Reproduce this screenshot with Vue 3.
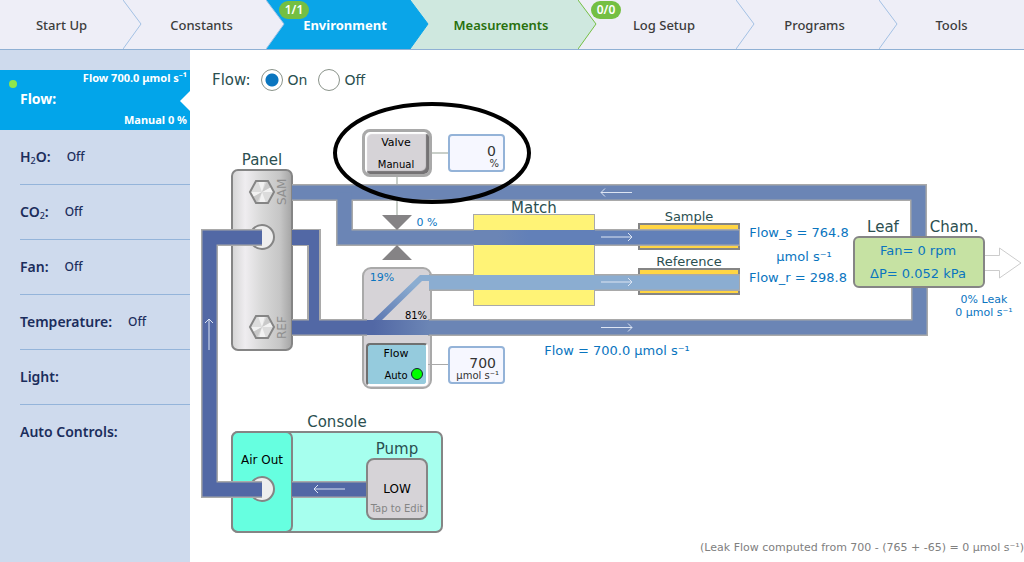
<script setup>
import { ref } from 'vue'

const tabs = [
  { name: 'Start Up', grow: 123, kind: 'plain' },
  { name: 'Constants', grow: 143, kind: 'plain' },
  { name: 'Environment', grow: 144, kind: 'active', badge: '1/1' },
  { name: 'Measurements', grow: 168, kind: 'green' },
  { name: 'Log Setup', grow: 158, kind: 'plain', badge: '0/0' },
  { name: 'Programs', grow: 143, kind: 'plain' },
  { name: 'Tools', grow: 145, kind: 'plain' }
]

const settings = [
  { pre: 'H', sub: '2', post: 'O:', state: 'Off' },
  { pre: 'CO', sub: '2', post: ':', state: 'Off' },
  { pre: 'Fan:', state: 'Off' },
  { pre: 'Temperature:', state: 'Off' },
  { pre: 'Light:' },
  { pre: 'Auto Controls:' }
]

const flow = ref('on')
const valve = ref('0')
const flowRate = ref('700')
</script>

<template>
  <div class="app">
    <nav class="tabs" aria-label="Sections">
      <button
        v-for="(t, i) in tabs"
        :key="t.name"
        type="button"
        class="tab"
        :class="t.kind"
        :style="{ flexGrow: t.grow, zIndex: 10 - i }"
      >
        <span class="tab-name">{{ t.name }}</span>
        <svg v-if="i < 6" class="chevron" viewBox="0 0 19 49" preserveAspectRatio="none" aria-hidden="true">
          <path class="fill" d="M0 0L18 24L0 49Z" />
          <path class="edge" d="M0 0L18 24L0 49" />
        </svg>
        <span v-if="t.badge" class="badge">{{ t.badge }}</span>
      </button>
    </nav>

    <div class="body">
      <aside class="side">
        <button type="button" class="current">
          <span class="dot"></span>
          <span class="top">Flow 700.0 μmol s⁻¹</span>
          <span class="title">Flow:</span>
          <span class="bottom">Manual 0 %</span>
        </button>
        <button v-for="s in settings" :key="s.pre" type="button" class="setting">
          <span class="name">{{ s.pre }}<sub v-if="s.sub">{{ s.sub }}</sub>{{ s.post }}</span>
          <span class="state">{{ s.state }}</span>
        </button>
      </aside>

      <main class="main">
        <div class="switch" role="radiogroup" aria-labelledby="flow-label">
          <span id="flow-label" class="switch-name">Flow:</span>
          <label><input v-model="flow" type="radio" name="flow" value="on" />On</label>
          <label><input v-model="flow" type="radio" name="flow" value="off" />Off</label>
        </div>

        <svg class="diagram" viewBox="190 100 834 436">
          <defs>
            <linearGradient id="metal">
              <stop offset="0" stop-color="#d4d4d4" />
              <stop offset="0.22" stop-color="#efedf0" />
              <stop offset="0.5" stop-color="#d8d8d8" />
              <stop offset="0.8" stop-color="#c6c6c6" />
              <stop offset="1" stop-color="#a4a4a4" />
            </linearGradient>
            <linearGradient id="split">
              <stop offset="0.1" stop-color="#5268a5" />
              <stop offset="1" stop-color="#6b85b5" />
            </linearGradient>
            <linearGradient id="rise" x1="0" y1="1" x2="1" y2="0">
              <stop offset="0" stop-color="#5c76b0" />
              <stop offset="0.75" stop-color="#8badd1" />
            </linearGradient>
            <linearGradient id="mix">
              <stop offset="0.2" stop-color="#6b85b5" />
              <stop offset="0.45" stop-color="#6280b8" />
            </linearGradient>
            <g id="bolt">
              <path d="M-12 0L-6 -11H6L12 0L6 11H-6Z" fill="#dcdcdc" />
              <path d="M0 0L-4 -11H3ZM0 0L4 11H-3ZM0 0L-12 0L-9 5ZM0 0L12 0L9 -5Z" fill="#f2f2f2" />
              <path d="M0 0L5 -11L9 -5ZM0 0L-5 11L-9 5Z" fill="#c9c9c9" />
              <path d="M-12 0L-6 -11H6L12 0L6 11H-6Z" fill="none" stroke="#858585" stroke-width="2" />
            </g>
            <path id="arrow" d="M0 0H31M27 -4L31 0L27 4" />
          </defs>

          <!-- instrument panel -->
          <rect class="frame" x="232" y="170" width="60" height="180" rx="6" fill="url(#metal)" />
          <use href="#bolt" x="262" y="192" />
          <use href="#bolt" x="262" y="327" />
          <circle class="frame" cx="262" cy="237" r="12" fill="#eee" />
          <text class="port" transform="translate(286 205) rotate(-90)">SAM</text>
          <text class="port" transform="translate(286 339) rotate(-90)">REF</text>

          <!-- console -->
          <rect class="frame" x="232" y="432" width="210" height="100" rx="6" fill="#a6ffee" />
          <rect class="frame" x="232" y="432" width="60" height="100" rx="6" fill="#66ffe0" />
          <circle class="frame" cx="262" cy="489" r="12" fill="#eee" />

          <!-- splitter, match valve and analyzer cells -->
          <path d="M397 175V216" stroke="#c9cfc9" stroke-width="2" />
          <rect x="363" y="268" width="68" height="120" rx="8" fill="#d6d3d7" stroke="#a9a9a9" stroke-width="2" />
          <rect x="473.500" y="214.500" width="121" height="91" fill="#fff376" stroke="#a9a9a9" />
          <rect class="frame" x="639" y="224" width="100" height="25" fill="#ffd543" />
          <rect class="frame" x="639" y="269" width="100" height="25" fill="#ffd543" />

          <!-- tubing -->
          <g class="wall">
            <path d="M262 237.500H209.500V489.500H262" />
            <path d="M292 489.500H368M292 327.500H367" />
            <path d="M292 192.500H918.500V238" />
            <path d="M344.500 192.500V237.500H474M594 237.500H740" />
            <path d="M429 282.500H474M594 282.500H740" />
            <path d="M428 327.500H919.500V286" />
            <path d="M292 229H321V320H307V246H292Z" class="solid" />
          </g>
          <g class="lumen">
            <g stroke="#5268a5">
              <path d="M262 237.500H209.500V489.500H262" />
              <path d="M292 489.500H368M292 327.500H372" />
              <path d="M292 230H319V322H309V245H292Z" class="solid" />
            </g>
            <g stroke="#6b85b5">
              <path d="M292 192.500H918.500V238" />
              <path d="M344.500 192.500V237.500H474" />
              <path d="M428 327.500H919.500V286" />
            </g>
            <path d="M594 237.500H739" stroke="#6280b8" />
            <path d="M429 282.500H739" stroke="#8badd1" />
            <path d="M474 282.500H595" class="open" stroke="#8badd1" />
          </g>
          <rect x="474" y="230" width="121" height="15" fill="url(#mix)" />
          <path d="M372 321L420 275H430V281H422L381 321Z" fill="url(#rise)" />
          <rect x="367" y="320" width="62" height="15" fill="url(#split)" />

          <path d="M382 215H412L397 230ZM382 260L397 245L412 260Z" fill="#858385" />
          <path d="M431 153H449" stroke="#c9cfc9" stroke-width="2" />
          <path d="M427 364.500H449" stroke="#a9a9a9" />

          <g class="arrows">
            <use href="#arrow" transform="translate(632 192.500) rotate(180)" />
            <use href="#arrow" transform="translate(601 237)" />
            <use href="#arrow" transform="translate(601 282)" />
            <use href="#arrow" transform="translate(601 327.500)" />
            <use href="#arrow" transform="translate(209 350) rotate(-90)" />
            <use href="#arrow" transform="translate(345 489) rotate(180)" />
          </g>

          <!-- leaf chamber -->
          <rect class="frame" x="854" y="237" width="130" height="50" rx="5" fill="#c6e2a3" />
          <path d="M985 255.500H999.500V248L1021 263L999.500 278V270.500H985" fill="#fff" stroke="#ccc" />

          <g class="heading">
            <text x="262" y="165">Panel</text>
            <text x="534" y="213">Match</text>
            <text x="883" y="232">Leaf</text>
            <text x="954" y="232">Cham.</text>
            <text x="337" y="427">Console</text>
            <text x="397" y="454">Pump</text>
          </g>
          <g class="cell">
            <text x="689" y="221">Sample</text>
            <text x="689" y="266">Reference</text>
          </g>
          <g class="reading">
            <text x="799" y="237">Flow_s = 764.8</text>
            <text x="804" y="261">μmol s⁻¹</text>
            <text x="798" y="282">Flow_r = 298.8</text>
            <text x="617" y="355">Flow = 700.0 μmol s⁻¹</text>
            <text x="918" y="255">Fan= 0 rpm</text>
            <text x="918" y="278">ΔP= 0.052 kPa</text>
          </g>
          <g class="reading small">
            <text x="427" y="226">0 %</text>
            <text x="382" y="281">19%</text>
            <text x="984" y="303">0% Leak</text>
            <text x="984" y="316">0 μmol s⁻¹</text>
          </g>
          <text class="share" x="416" y="319">81%</text>
          <text class="outlet" x="262" y="464">Air Out</text>

          <foreignObject x="362" y="129" width="70" height="48">
            <button type="button" class="key valve"><span>Valve</span><small>Manual</small></button>
          </foreignObject>
          <foreignObject x="366" y="343" width="62" height="43">
            <button type="button" class="key auto">
              <span>Flow</span><small>Auto</small><i class="led"></i>
            </button>
          </foreignObject>
          <foreignObject x="448" y="134" width="57" height="38">
            <label class="entry"><input v-model="valve" type="text" aria-label="Valve" /><span class="unit">%</span></label>
          </foreignObject>
          <foreignObject x="448" y="346" width="57" height="38">
            <label class="entry"><input v-model="flowRate" type="text" aria-label="Flow rate" /><span class="unit">μmol s⁻¹</span></label>
          </foreignObject>
          <foreignObject x="366" y="458" width="62" height="62">
            <button type="button" class="pump"><span>LOW</span><small>Tap to Edit</small></button>
          </foreignObject>

          <ellipse cx="432" cy="153" rx="97" ry="49" fill="none" stroke="#000" stroke-width="4" />
        </svg>

        <p class="note">(Leak Flow computed from 700 - (765 + -65) = 0 μmol s⁻¹)</p>
      </main>
    </div>
  </div>
</template>

<style>
body {
  margin: 0;
  background: #fff;
}
</style>

<style scoped>
.app {
  min-height: 100vh;
  display: flex;
  flex-direction: column;
  font-family: "Noto Sans", sans-serif;
}
button {
  margin: 0;
  padding: 0;
  border: 0;
  font-family: inherit;
  color: inherit;
  background: none;
}
.tabs {
  display: flex;
  height: 49px;
  overflow: hidden;
  border-bottom: 1px solid #8fb0d4;
  background: #eeeef7;
}
.tab {
  position: relative;
  flex-basis: 0;
  min-width: 0;
  font-size: 13px;
  line-height: 18px;
  font-weight: 500;
  color: #3c3c3c;
  background: #eeeef7;
}
.tab-name {
  display: block;
  padding-left: 14px;
}
.tab:first-child .tab-name,
.tab:last-child .tab-name {
  padding-left: 0;
}
.tab.active {
  color: #fff;
  font-weight: 700;
  background: #0aa5e8;
}
.tab.green {
  color: #28700c;
  font-weight: 600;
  background: #cfe8df;
}
.chevron {
  position: absolute;
  left: 100%;
  top: 0;
  width: 19px;
  height: 100%;
}
.fill { fill: #eeeef7; }
.edge { fill: none; stroke: #a3c1e4; }
.active .fill { fill: #0aa5e8; }
.active .edge { stroke: #0aa5e8; }
.green .fill { fill: #cfe8df; }
.green .edge { stroke: #74bf43; }
.badge {
  position: absolute;
  left: 13px;
  top: 1px;
  width: 30px;
  border-radius: 9px;
  font-size: 12px;
  line-height: 18px;
  font-weight: 600;
  color: #fff;
  background: #74bf43;
}
.body {
  flex: 1;
  display: flex;
}
.side {
  flex: none;
  box-sizing: border-box;
  width: 190px;
  padding-top: 20px;
  background: #cedaed;
}
.current {
  position: relative;
  display: flex;
  flex-direction: column;
  justify-content: space-between;
  box-sizing: border-box;
  width: 100%;
  height: 60px;
  padding: 0 3px 2px 20px;
  font-size: 11px;
  line-height: 16px;
  font-weight: 700;
  text-align: left;
  color: #fff;
  background: #02a5ea;
}
.current::after {
  content: "";
  position: absolute;
  right: 0;
  top: 21px;
  border: 10px solid transparent;
  border-left-width: 0;
  border-right-color: #fff;
}
.top, .bottom { align-self: flex-end; }
.title {
  font-size: 14px;
  line-height: 18px;
}
.dot {
  position: absolute;
  left: 9px;
  top: 10px;
  width: 8px;
  height: 8px;
  border-radius: 50%;
  background: #8fe64a;
}
.setting {
  display: flex;
  align-items: center;
  gap: 16px;
  box-sizing: border-box;
  width: 170px;
  height: 55px;
  margin-left: 20px;
  border-bottom: 1px solid #94b4da;
  font-size: 14px;
  line-height: 20px;
  color: #1b2d5c;
}
.setting:last-child { border-bottom-color: transparent; }
.name { font-weight: 600; }
.name sub {
  font-size: 9px;
  line-height: 0;
  font-weight: 500;
  vertical-align: -2px;
}
.state {
  font-size: 12px;
  font-weight: 500;
}
.main {
  flex: 1;
  min-width: 0;
  display: flex;
  flex-direction: column;
  font-family: "DejaVu Sans", sans-serif;
}
.switch {
  display: flex;
  align-items: center;
  box-sizing: border-box;
  height: 50px;
  padding: 9px 22px 0;
  font-size: 14px;
  line-height: 20px;
  color: #2b4f50;
}
.switch-name {
  margin-right: 11px;
  font-size: 15px;
}
.switch label {
  display: flex;
  align-items: center;
  gap: 4px;
  margin-right: 11px;
}
.switch input {
  appearance: none;
  box-sizing: border-box;
  width: 22px;
  height: 22px;
  margin: 0;
  border: 1px solid #8a938a;
  border-radius: 50%;
  background: #fff;
}
.switch input:checked {
  background: radial-gradient(circle, #0a75bf 6px, #fff 7px);
}
.diagram {
  display: block;
  width: 100%;
  height: auto;
}
.frame {
  stroke: #858585;
  stroke-width: 2;
}
.wall {
  fill: none;
  stroke: #a9a9a9;
  stroke-width: 17;
}
.wall .solid {
  fill: #a9a9a9;
  stroke: none;
}
.lumen {
  fill: none;
  stroke-width: 14;
}
.lumen .open {
  stroke-width: 15;
}
.lumen .solid {
  fill: #5268a5;
  stroke: none;
}
.arrows {
  fill: none;
  stroke: #dde5f3;
}
text {
  text-anchor: middle;
}
.port {
  text-anchor: start;
  font-size: 12px;
  fill: #8f8f8f;
}
.heading { font-size: 15px; fill: #2b4f50; }
.cell { font-size: 13px; fill: #2b4f50; }
.reading { font-size: 13px; fill: #0a75bf; }
.reading.small { font-size: 11px; }
.share { font-size: 10px; }
.outlet { font-size: 12px; }
.key {
  position: relative;
  display: flex;
  flex-direction: column;
  align-items: center;
  justify-content: space-between;
  box-sizing: border-box;
  width: 100%;
  height: 100%;
  font-size: 11px;
  line-height: 14px;
  color: #000;
}
.key small {
  font-size: 10px;
  line-height: 14px;
}
.valve {
  padding: 4px 2px 2px 0;
  border: 3px solid #a9a9a9;
  border-radius: 8px;
  background: #d6d3d7;
  box-shadow: inset 2px 2px 1px #fff, inset -3px -3px 1px #747274;
}
.auto {
  padding: 2px 2px 1px 0;
  border: 2px solid;
  border-color: #707070 #fff #fff #707070;
  border-radius: 4px;
  background: #95cbdd;
}
.led {
  position: absolute;
  right: 3px;
  bottom: 4px;
  width: 10px;
  height: 10px;
  border: 1px solid #123;
  border-radius: 50%;
  background: #0f0;
}
.entry {
  display: flex;
  flex-direction: column;
  align-items: flex-end;
  box-sizing: border-box;
  width: 100%;
  height: 100%;
  padding: 7px 4px 0 2px;
  border: 2px solid #94b3d8;
  border-radius: 4px;
  background: #f6f7ff;
  color: #333;
}
.entry input {
  box-sizing: border-box;
  width: 100%;
  height: 16px;
  padding: 0 3px 0 0;
  border: 0;
  outline: 0;
  background: transparent;
  font-family: inherit;
  font-size: 14px;
  text-align: right;
  color: inherit;
}
.unit {
  font-size: 10px;
  line-height: 10px;
  white-space: nowrap;
}
.pump {
  display: flex;
  flex-direction: column;
  align-items: center;
  box-sizing: border-box;
  width: 100%;
  height: 100%;
  padding-top: 21px;
  border: 2px solid #858585;
  border-radius: 8px;
  background: #d6d3d7;
  font-size: 12px;
  line-height: 16px;
  color: #000;
}
.pump small {
  margin-top: 5px;
  font-size: 10px;
  line-height: 14px;
  white-space: nowrap;
  color: #858585;
}
.note {
  margin: auto 0 0;
  padding-bottom: 6px;
  font-size: 11px;
  line-height: 16px;
  text-align: right;
  white-space: nowrap;
  color: #808080;
}
</style>
